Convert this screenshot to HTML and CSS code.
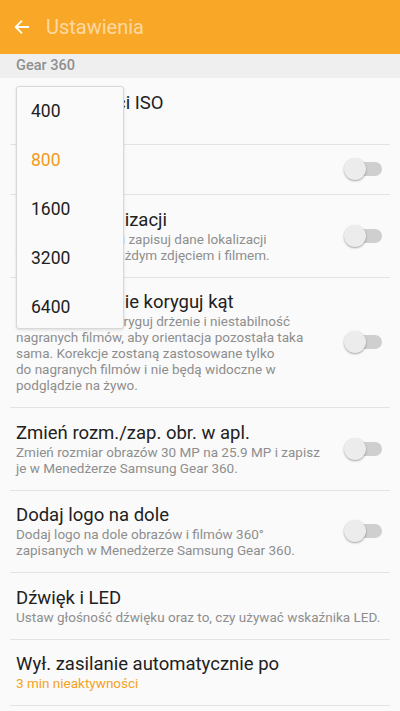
FILE: index.html
```html
<!DOCTYPE html>
<html lang="pl">
<head>
    <meta charset="UTF-8">
    <meta name="viewport" content="width=device-width, initial-scale=1.0">
    <title>Ustawienia</title>
    <link rel="stylesheet" href="styles.css">
</head>
<body>
    <header class="app-bar">
        <svg class="back-icon" width="16" height="16" viewBox="0 0 16 16">
            <path d="M15 8H1.6M8 1.6L1.6 8L8 14.4" fill="none" stroke="#fff" stroke-width="1.8"/>
        </svg>
        <h1 class="app-title">Ustawienia</h1>
    </header>

    <div class="section-label">Gear 360</div>

    <div class="settings">
        <div class="row">
            <div class="row-text">
                <p class="row-title">Limit czułości ISO</p>
                <p class="row-sub accent">800</p>
            </div>
        </div>

        <div class="row">
            <div class="row-text">
                <p class="row-title">HDR</p>
            </div>
            <span class="switch"></span>
        </div>

        <div class="row">
            <div class="row-text">
                <p class="row-title">Etykieta lokalizacji</p>
                <p class="row-sub">Odczytuj z GPS-u i zapisuj dane lokalizacji<br>telefonu wraz z każdym zdjęciem i filmem.</p>
            </div>
            <span class="switch"></span>
        </div>

        <div class="row">
            <div class="row-text">
                <p class="row-title">Automatycznie koryguj kąt</p>
                <p class="row-sub">Automatycznie koryguj drżenie i niestabilność<br>nagranych filmów, aby orientacja pozostała taka<br>sama. Korekcje zostaną zastosowane tylko<br>do nagranych filmów i nie będą widoczne w<br>podglądzie na żywo.</p>
            </div>
            <span class="switch"></span>
        </div>

        <div class="row">
            <div class="row-text">
                <p class="row-title">Zmień rozm./zap. obr. w apl.</p>
                <p class="row-sub">Zmień rozmiar obrazów 30 MP na 25.9 MP i zapisz<br>je w Menedżerze Samsung Gear 360.</p>
            </div>
            <span class="switch"></span>
        </div>

        <div class="row">
            <div class="row-text">
                <p class="row-title">Dodaj logo na dole</p>
                <p class="row-sub">Dodaj logo na dole obrazów i filmów 360°<br>zapisanych w Menedżerze Samsung Gear 360.</p>
            </div>
            <span class="switch"></span>
        </div>

        <div class="row">
            <div class="row-text">
                <p class="row-title">Dźwięk i LED</p>
                <p class="row-sub">Ustaw głośność dźwięku oraz to, czy używać wskaźnika LED.</p>
            </div>
        </div>

        <div class="row">
            <div class="row-text">
                <p class="row-title">Wył. zasilanie automatycznie po</p>
                <p class="row-sub accent">3 min nieaktywności</p>
            </div>
        </div>
    </div>

    <ul class="dropdown">
        <li>400</li>
        <li class="selected">800</li>
        <li>1600</li>
        <li>3200</li>
        <li>6400</li>
    </ul>
</body>
</html>
```

FILE: styles.css
```css
body {
    font-family: Roboto, 'Noto Sans', sans-serif;
    margin: 0;
    padding: 0;
    background: #fafafa;
    color: #212121;
}

.app-bar {
    height: 54px;
    background: #f9a727;
    display: flex;
    align-items: center;
    padding-left: 14px;
}

.back-icon {
    flex-shrink: 0;
    margin-right: 16px;
}

.app-title {
    margin: 0;
    font-size: 20px;
    font-weight: 400;
    color: rgba(255, 255, 255, 0.58);
}

.section-label {
    height: 24px;
    line-height: 24px;
    background: #efefef;
    padding-left: 16px;
    font-size: 14.5px;
    font-weight: 500;
    color: #8f8f8f;
}

.row {
    display: flex;
    align-items: center;
    margin: 0 10px;
    padding: 13.5px 8px 14px 6px;
    border-bottom: 1px solid #e3e3e3;
}

.row-text {
    flex: 1;
    min-width: 0;
}

.row-title {
    margin: 0;
    font-size: 18.5px;
    line-height: 22px;
    color: #212121;
    white-space: nowrap;
}

.row-sub {
    margin: 0;
    font-size: 13.5px;
    line-height: 16px;
    color: #8e8e8e;
    white-space: nowrap;
}

.row-sub.accent {
    color: #f5a223;
}

.switch {
    position: relative;
    flex-shrink: 0;
    width: 38px;
    height: 22px;
}

.switch::before {
    content: '';
    position: absolute;
    right: 0;
    top: 4px;
    width: 32px;
    height: 14px;
    border-radius: 7px;
    background: #cfcfcf;
}

.switch::after {
    content: '';
    position: absolute;
    left: 0;
    top: 0;
    width: 22px;
    height: 22px;
    border-radius: 50%;
    background: #ececec;
    box-shadow: 0 1px 2px rgba(0, 0, 0, 0.35);
}

.dropdown {
    position: absolute;
    left: 16px;
    top: 86px;
    width: 106px;
    height: 241px;
    margin: 0;
    padding: 0;
    list-style: none;
    overflow: hidden;
    background: #fafafa;
    border: 1px solid #d8d8d8;
    border-radius: 3px;
    box-shadow: 0 1px 3px rgba(0, 0, 0, 0.12);
}

.dropdown li {
    height: 49px;
    line-height: 49px;
    padding-left: 14px;
    font-size: 17.5px;
    color: #212121;
}

.dropdown li.selected {
    color: #f39a1b;
}
```
